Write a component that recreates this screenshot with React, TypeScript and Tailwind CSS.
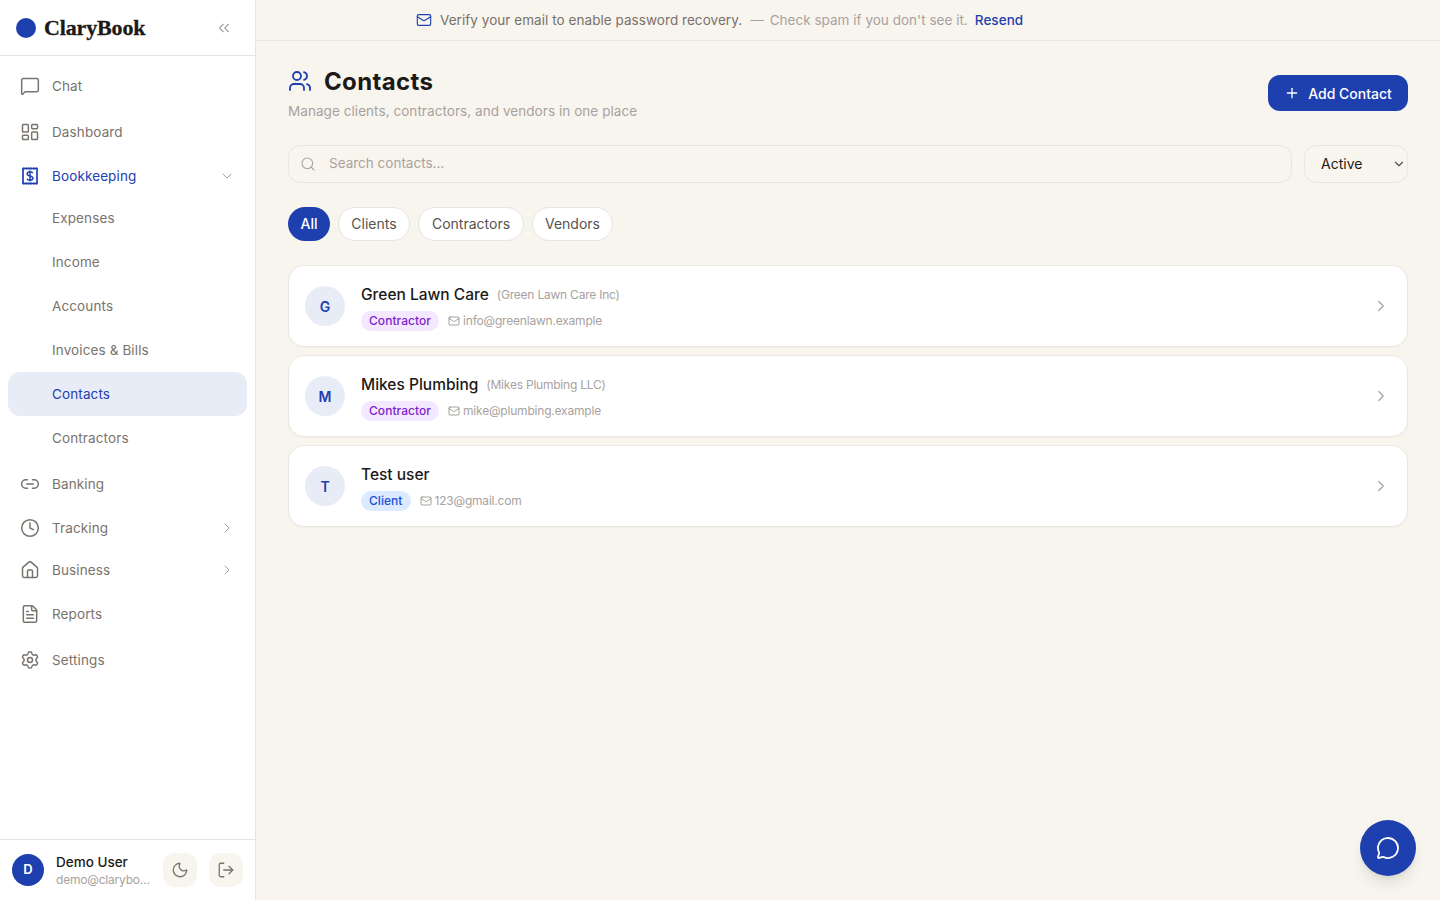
import {
  ChevronDown,
  ChevronRight,
  ChevronsLeft,
  Clock,
  FileText,
  House,
  LayoutDashboard,
  Link2,
  LogOut,
  Mail,
  MessageCircle,
  MessageSquare,
  Moon,
  Plus,
  Search,
  Settings,
  Users,
} from "lucide-react";

const font = "font-['Inter','Noto_Sans',sans-serif]";

function BookkeepingIcon() {
  return (
    <svg width="20" height="20" viewBox="0 0 20 20" fill="none" stroke="#1e40af" strokeWidth="1.7">
      <path d="M3 2.500h14v15H3z" />
      <path d="M3 2.500h14M3 17.500h14" strokeDasharray="1.500 1" strokeWidth="2" />
      <path d="M12.800 7c-.5-.8-1.500-1.200-2.800-1.200-1.600 0-2.800.8-2.800 2.100 0 2.800 5.700 1.400 5.700 4.200 0 1.300-1.300 2.100-2.900 2.100-1.400 0-2.500-.5-3-1.400M10 4.500v11" strokeWidth="1.500" />
    </svg>
  );
}

function NavItem({ icon, label, chevron, y }: { icon: React.ReactNode; label: string; chevron?: boolean; y: string }) {
  return (
    <div className={`flex items-center pl-3 pr-3 ${y} text-[#7a736c]`}>
      <span className="flex w-5 justify-center">{icon}</span>
      <span className="ml-3 flex-1 text-[13.500px] tracking-[0.12px]">{label}</span>
      {chevron && <ChevronRight size={16} strokeWidth={1.5} className="text-[#a8a29e]" />}
    </div>
  );
}

function SubItem({ label, active }: { label: string; active?: boolean }) {
  return (
    <div
      className={`flex h-11 items-center rounded-xl pl-11 text-[13.500px] tracking-[0.12px] ${
        active ? "bg-[#e8ecf7] text-[#1e40af]" : "text-[#7a736c]"
      }`}
    >
      {label}
    </div>
  );
}

function Sidebar() {
  return (
    <aside className="flex h-full w-[256px] shrink-0 flex-col border-r border-[#e7e5e4] bg-white">
      <div className="flex h-[56px] shrink-0 items-center border-b border-[#e7e5e4] pl-4 pr-[22px]">
        <span className="h-5 w-5 rounded-full bg-[#1e40af]" />
        <span className="ml-2 flex-1 font-['Liberation_Serif',serif] text-[22px] font-bold tracking-[-0.15px] text-[#1c1917] [-webkit-text-stroke:0.3px_#1c1917]">
          ClaryBook
        </span>
        <ChevronsLeft size={18} strokeWidth={1.5} className="text-[#a8a29e]" />
      </div>
      <nav className="flex-1 px-2 pt-2">
        <NavItem y="h-11" icon={<MessageSquare size={20} strokeWidth={1.8} />} label="Chat" />
        <NavItem y="mt-0.5 h-11" icon={<LayoutDashboard size={20} strokeWidth={1.8} />} label="Dashboard" />
        <div className="flex h-11 items-center pl-3 pr-3 text-[#1e40af]">
          <BookkeepingIcon />
          <span className="ml-3 flex-1 text-[13.500px] tracking-[0.12px]">Bookkeeping</span>
          <ChevronDown size={16} strokeWidth={1.5} className="text-[#a8a29e]" />
        </div>
        <div className="-mt-0.5 flex flex-col">
          <SubItem label="Expenses" />
          <SubItem label="Income" />
          <SubItem label="Accounts" />
          <SubItem label="Invoices & Bills" />
          <SubItem label="Contacts" active />
          <SubItem label="Contractors" />
        </div>
        <NavItem y="h-11 mt-0.5" icon={<Link2 size={20} strokeWidth={1.8} />} label="Banking" />
        <NavItem y="h-11" icon={<Clock size={20} strokeWidth={1.8} />} label="Tracking" chevron />
        <NavItem y="h-10" icon={<House size={20} strokeWidth={1.8} />} label="Business" chevron />
        <NavItem y="h-11 mt-0.5" icon={<FileText size={20} strokeWidth={1.8} />} label="Reports" />
        <NavItem y="h-11 mt-0.5" icon={<Settings size={20} strokeWidth={1.8} />} label="Settings" />
      </nav>
      <div className="flex h-[61px] shrink-0 items-center border-t border-[#e7e5e4] pl-3 pr-3">
        <span className="flex h-8 w-8 items-center justify-center rounded-full bg-[#1e40af] text-[13px] font-semibold text-white">
          D
        </span>
        <div className="ml-3 min-w-0 flex-1 pt-[2px]">
          <div className="text-[13.500px] leading-[17px] font-medium text-[#1c1917]">Demo User</div>
          <div className="w-[97px] truncate text-[12px] leading-[17px] tracking-[-0.2px] text-[#a8a29e]">demo@clarybook.app</div>
        </div>
        <span className="flex h-[34px] w-[34px] items-center justify-center rounded-xl bg-[#f8f5ee] text-[#78716c]">
          <Moon size={18} strokeWidth={1.7} />
        </span>
        <span className="ml-3 flex h-[34px] w-[34px] items-center justify-center rounded-xl bg-[#f8f5ee] text-[#78716c]">
          <LogOut size={18} strokeWidth={1.7} />
        </span>
      </div>
    </aside>
  );
}

function ContactCard({
  initial,
  name,
  company,
  kind,
  email,
}: {
  initial: string;
  name: string;
  company?: string;
  kind: "Contractor" | "Client";
  email: string;
}) {
  return (
    <div className="flex h-[82px] items-center rounded-2xl border border-[#ebe8e1] bg-white pl-4 pr-[17px] shadow-[0_1px_2px_rgba(0,0,0,0.03)]">
      <span className="flex h-10 w-10 items-center justify-center rounded-full bg-[#e8ecf7] text-[14px] font-semibold text-[#1e40af]">
        {initial}
      </span>
      <div className="ml-4 flex-1 pt-[2px]">
        <div className="flex items-center">
          <span className="text-[15.500px] leading-[24px] font-medium text-[#1c1917]">{name}</span>
          {company && <span className="ml-2 text-[12px] tracking-[-0.22px] text-[#a8a29e]">({company})</span>}
        </div>
        <div className="mt-[4px] flex items-center">
          <span
            className={`flex h-5 items-center rounded-full px-2 text-[12px] font-medium tracking-[0.05px] ${
              kind === "Contractor" ? "bg-[#f3e8ff] text-[#7e22ce]" : "bg-[#dbeafe] text-[#1d4ed8]"
            }`}
          >
            {kind}
          </span>
          <Mail size={12} strokeWidth={1.5} className="ml-[9px] text-[#8a837c]" />
          <span className="ml-[3px] text-[12px] tracking-[-0.2px] text-[#a8a29e]">{email}</span>
        </div>
      </div>
      <ChevronRight size={18} strokeWidth={1.6} className="text-[#a8a29e]" />
    </div>
  );
}

export default function App() {
  return (
    <div className={`flex h-screen w-full overflow-hidden bg-[#f8f5ee] ${font}`}>
      <Sidebar />
      <main className="relative flex min-w-0 flex-1 flex-col">
        <div className="flex h-[41px] shrink-0 items-center border-b border-[#e7e8ea] pl-[160px] text-[13.500px] tracking-[0.05px]">
          <Mail size={16} strokeWidth={1.7} className="text-[#1e40af]" />
          <span className="ml-2 text-[#78716c]">Verify your email to enable password recovery.</span>
          <span className="ml-2 text-[#a8a29e]">—</span>
          <span className="ml-[6px] tracking-[0.02px] text-[#a8a29e]">Check spam if you don't see it.</span>
          <span className="ml-[7px] font-medium text-[#1e40af]">Resend</span>
        </div>
        <div className="px-8 pt-[24px]">
          <div className="flex items-start justify-between">
            <div>
              <div className="flex h-8 items-center">
                <Users size={24} strokeWidth={1.8} className="text-[#1e40af]" />
                <h1 className="ml-3 h-8 pt-[2px] text-[24px] leading-[30px] font-bold tracking-[0.35px] text-[#1c1917]">Contacts</h1>
              </div>
              <p className="mt-[2px] text-[13.500px] leading-[24px] tracking-[0.06px] text-[#a8a29e]">
                Manage clients, contractors, and vendors in one place
              </p>
            </div>
            <button className="mt-[10px] flex h-9 w-[140px] items-center justify-center rounded-xl bg-[#1e40af] text-[14px] font-medium text-white">
              <Plus size={16} />
              <span className="ml-2">Add Contact</span>
            </button>
          </div>
          <div className="mt-[22px] flex gap-3">
            <div className="flex h-[38px] flex-1 items-center rounded-xl border border-[#e7e5e0] pl-[11px] text-[13.500px] text-[#a8a29e]">
              <Search size={16} strokeWidth={1.6} />
              <span className="ml-[13px] pb-[1px]">Search contacts...</span>
            </div>
            <div className="flex h-[38px] w-[104px] items-center rounded-xl border border-[#e7e5e0] pl-4 pr-[1px] text-[14px] text-[#1c1917]">
              <span className="flex-1 pb-[1px]">Active</span>
              <ChevronDown size={14} className="text-[#57534e]" />
            </div>
          </div>
          <div className="mt-6 flex gap-2 text-[14px] text-[#57534e]">
            <span className="flex h-[34px] w-[42px] items-center justify-center rounded-full bg-[#1e40af] pb-[1px] font-medium text-white">All</span>
            <span className="flex h-[34px] w-[72px] items-center justify-center rounded-full border border-[#e7e5e0] bg-white pb-[1px]">Clients</span>
            <span className="flex h-[34px] w-[106px] items-center justify-center rounded-full border border-[#e7e5e0] bg-white pb-[1px]">Contractors</span>
            <span className="flex h-[34px] w-[81px] items-center justify-center rounded-full border border-[#e7e5e0] bg-white pb-[1px]">Vendors</span>
          </div>
          <div className="mt-6 flex flex-col gap-2">
            <ContactCard initial="G" name="Green Lawn Care" company="Green Lawn Care Inc" kind="Contractor" email="info@greenlawn.example" />
            <ContactCard initial="M" name="Mikes Plumbing" company="Mikes Plumbing LLC" kind="Contractor" email="mike@plumbing.example" />
            <ContactCard initial="T" name="Test user" kind="Client" email="123@gmail.com" />
          </div>
        </div>
        <button className="absolute right-6 bottom-6 flex h-14 w-14 items-center justify-center rounded-full bg-[#1e40af] text-white shadow-lg">
          <MessageCircle size={24} strokeWidth={1.8} />
        </button>
      </main>
    </div>
  );
}
